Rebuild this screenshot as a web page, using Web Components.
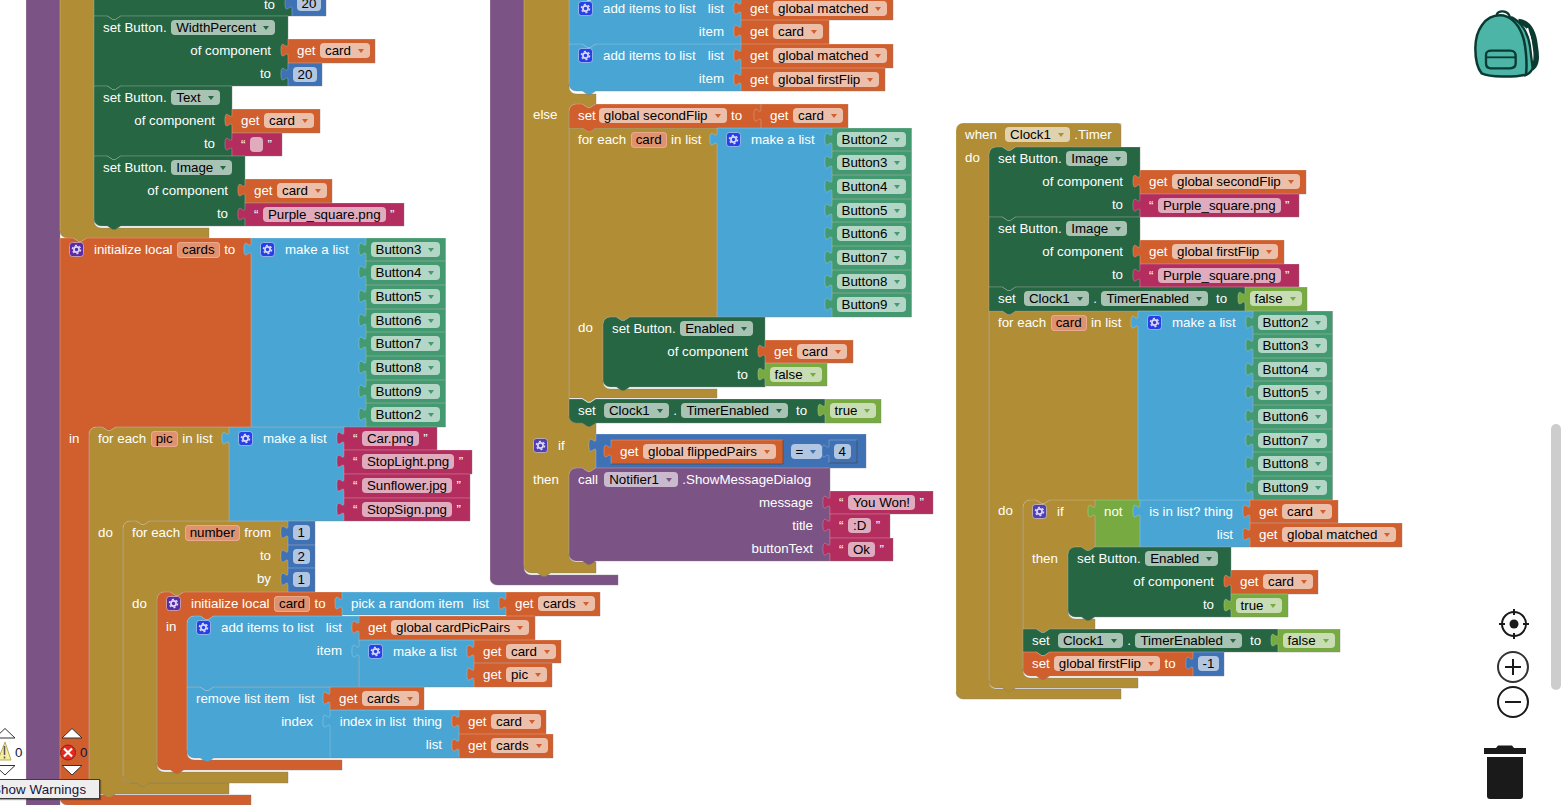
<!DOCTYPE html>
<html>
<head>
<meta charset="utf-8">
<title>Blocks</title>
<style>
  html, body { margin: 0; padding: 0; background: #fff; overflow: hidden; }
</style>
</head>
<body>
<blk-workspace>
  <!-- left stack -->
  <blk-block c="proc" x="26" y="-100" edge="60:815"></blk-block>
  <blk-block c="ctrl" x="60" y="-100" edge="94:228 209:238" rb nb></blk-block>
  <blk-block c="set" x="94" y="-54" edge="292:16" nt nb>
    <blk-row h="46.6"></blk-row>
    <blk-row right>to</blk-row>
  </blk-block>
  <blk-num x="292" y="-8" r="326" b="16">20</blk-num>
  <blk-block c="set" x="94" y="16" edge="288:86" nt nb>
    <blk-row>set Button.<blk-field>WidthPercent</blk-field></blk-row>
    <blk-row right>of component</blk-row>
    <blk-row right>to</blk-row>
  </blk-block>
  <blk-get x="288" y="39" r="375" b="63">card</blk-get>
  <blk-num x="288" y="63" r="322" b="86">20</blk-num>
  <blk-block c="set" x="94" y="86" edge="232:156" nt nb>
    <blk-row>set Button.<blk-field>Text</blk-field></blk-row>
    <blk-row right>of component</blk-row>
    <blk-row right>to</blk-row>
  </blk-block>
  <blk-get x="232" y="109" r="320" b="133">card</blk-get>
  <blk-str x="232" y="133" r="282" b="156"></blk-str>
  <blk-block c="set" x="94" y="156" edge="245:226" nt nb rb>
    <blk-row>set Button.<blk-field>Image</blk-field></blk-row>
    <blk-row right>of component</blk-row>
    <blk-row right>to</blk-row>
  </blk-block>
  <blk-get x="245" y="179" r="332" b="203">card</blk-get>
  <blk-str x="245" y="203" r="404" b="226">Purple_square.png</blk-str>

  <blk-block c="var" x="60" y="238" edge="251:427 89:795 251:805" nt rb nb>
    <blk-row><blk-gear tone="#5a2ba6"></blk-gear>initialize local<blk-field name>cards</blk-field>to</blk-row>
    <blk-row h="166"></blk-row>
    <blk-row>in</blk-row>
  </blk-block>
  <blk-block c="list" x="251" y="238" edge="366:427" tab>
    <blk-row><blk-gear></blk-gear>make a list</blk-row>
  </blk-block>
  <blk-btn x="366" y="238" b="261">Button3</blk-btn>
  <blk-btn x="366" y="261" b="285">Button4</blk-btn>
  <blk-btn x="366" y="285" b="309">Button5</blk-btn>
  <blk-btn x="366" y="309" b="332">Button6</blk-btn>
  <blk-btn x="366" y="332" b="356">Button7</blk-btn>
  <blk-btn x="366" y="356" b="380">Button8</blk-btn>
  <blk-btn x="366" y="380" b="403">Button9</blk-btn>
  <blk-btn x="366" y="403" b="427">Button2</blk-btn>

  <blk-block c="ctrl" x="89" y="427" edge="229:521 123:783 229:794" rt nt rb nb>
    <blk-row>for each<blk-field name>pic</blk-field>in list</blk-row>
    <blk-row h="71"></blk-row>
    <blk-row>do</blk-row>
  </blk-block>
  <blk-block c="list" x="229" y="427" edge="344:521" tab>
    <blk-row><blk-gear></blk-gear>make a list</blk-row>
  </blk-block>
  <blk-str x="344" y="427" r="437" b="450">Car.png</blk-str>
  <blk-str x="344" y="450" r="472" b="474">StopLight.png</blk-str>
  <blk-str x="344" y="474" r="470" b="498">Sunflower.jpg</blk-str>
  <blk-str x="344" y="498" r="470" b="521">StopSign.png</blk-str>

  <blk-block c="ctrl" x="123" y="521" edge="288:592 157:772 288:783" rt nt rb nb>
    <blk-row right>for each<blk-field name>number</blk-field>from</blk-row>
    <blk-row right>to</blk-row>
    <blk-row right>by</blk-row>
    <blk-row h="2"></blk-row>
    <blk-row>do</blk-row>
  </blk-block>
  <blk-num x="288" y="521" r="315" b="545">1</blk-num>
  <blk-num x="288" y="545" r="315" b="568">2</blk-num>
  <blk-num x="288" y="568" r="315" b="592">1</blk-num>

  <blk-block c="var" x="157" y="592" edge="342:616 187:760 342:770" rt nt rb nb>
    <blk-row><blk-gear tone="#5a2ba6"></blk-gear>initialize local<blk-field name>card</blk-field>to</blk-row>
    <blk-row>in</blk-row>
  </blk-block>
  <blk-block c="list" x="342" y="592" edge="506:615" tab>
    <blk-row>pick a random item<blk-push></blk-push>list</blk-row>
  </blk-block>
  <blk-get x="506" y="592" r="600" b="616">cards</blk-get>
  <blk-block c="list" x="187" y="616" edge="359:687" rt nt nb>
    <blk-row><blk-gear></blk-gear>add items to list<blk-push></blk-push>list</blk-row>
    <blk-row right>item</blk-row>
  </blk-block>
  <blk-get x="359" y="616" r="535" b="640">global cardPicPairs</blk-get>
  <blk-block c="list" x="359" y="640" edge="474:687" tab>
    <blk-row><blk-gear></blk-gear>make a list</blk-row>
  </blk-block>
  <blk-get x="474" y="640" r="561" b="663">card</blk-get>
  <blk-get x="474" y="663" r="552" b="687">pic</blk-get>
  <blk-block c="list" x="187" y="687" edge="330:758" nt rb nb>
    <blk-row>remove list item<blk-push></blk-push>list</blk-row>
    <blk-row right>index</blk-row>
  </blk-block>
  <blk-get x="330" y="687" r="424" b="710">cards</blk-get>
  <blk-block c="list" x="330" y="710" edge="459:758" tab>
    <blk-row right>index in list&nbsp; thing</blk-row>
    <blk-row right>list</blk-row>
  </blk-block>
  <blk-get x="459" y="710" r="546" b="734">card</blk-get>
  <blk-get x="459" y="734" r="553" b="758">cards</blk-get>

  <!-- middle stack -->
  <blk-block c="proc" x="490" y="-100" edge="524:575 618:585" rb></blk-block>
  <blk-block c="ctrl" x="524" y="-60" edge="569:94 596:104 569:423 596:468 569:562 596:573" rb nb>
    <blk-row h="163"></blk-row>
    <blk-row>else</blk-row>
    <blk-row h="307.5"></blk-row>
    <blk-row><blk-gear tone="#4f3fb3"></blk-gear>if</blk-row>
    <blk-row h="11"></blk-row>
    <blk-row>then</blk-row>
  </blk-block>
  <blk-block c="list" x="569" y="-3" edge="741:44" nt nb>
    <blk-row><blk-gear></blk-gear>add items to list<blk-push></blk-push>list</blk-row>
    <blk-row right>item</blk-row>
  </blk-block>
  <blk-get x="741" y="-3" r="893" b="20">global matched</blk-get>
  <blk-get x="741" y="20" r="829" b="44">card</blk-get>
  <blk-block c="list" x="569" y="44" edge="741:91" nt rb nb>
    <blk-row><blk-gear></blk-gear>add items to list<blk-push></blk-push>list</blk-row>
    <blk-row right>item</blk-row>
  </blk-block>
  <blk-get x="741" y="44" r="893" b="68">global matched</blk-get>
  <blk-get x="741" y="68" r="885" b="91">global firstFlip</blk-get>

  <blk-block c="ctrl" x="569" y="128" edge="717:317 603:389 717:398" nt nb>
    <blk-row>for each<blk-field name>card</blk-field>in list</blk-row>
    <blk-row h="165"></blk-row>
    <blk-row>do</blk-row>
  </blk-block>
  <blk-block c="var" x="569" y="104" edge="761:128" rt nt nb>
    <blk-row>set<blk-field style="margin-left:-1.5px">global secondFlip</blk-field>to</blk-row>
  </blk-block>
  <blk-get x="761" y="104" r="848" b="128">card</blk-get>
  <blk-block c="list" x="717" y="128" edge="832:317" tab>
    <blk-row><blk-gear></blk-gear>make a list</blk-row>
  </blk-block>
  <blk-btn x="832" y="128" b="151">Button2</blk-btn>
  <blk-btn x="832" y="151" b="175">Button3</blk-btn>
  <blk-btn x="832" y="175" b="199">Button4</blk-btn>
  <blk-btn x="832" y="199" b="222">Button5</blk-btn>
  <blk-btn x="832" y="222" b="246">Button6</blk-btn>
  <blk-btn x="832" y="246" b="270">Button7</blk-btn>
  <blk-btn x="832" y="270" b="293">Button8</blk-btn>
  <blk-btn x="832" y="293" b="317">Button9</blk-btn>
  <blk-block c="set" x="603" y="317" edge="765:387" rt nt rb nb>
    <blk-row>set Button.<blk-field>Enabled</blk-field></blk-row>
    <blk-row right>of component</blk-row>
    <blk-row right>to</blk-row>
  </blk-block>
  <blk-get x="765" y="340" r="853" b="363">card</blk-get>
  <blk-bool x="765" y="363" r="827" b="386">false</blk-bool>
  <blk-block c="set" x="569" y="399" edge="825:423" nt rb nb>
    <blk-row>set&nbsp;<blk-field>Clock1</blk-field>.<blk-field>TimerEnabled</blk-field>&nbsp;to</blk-row>
  </blk-block>
  <blk-bool x="825" y="399" r="881" b="423">true</blk-bool>

  <blk-block c="math" x="596" y="434" edge="866:468" tab>
    <blk-row h="34"><blk-push w="181"></blk-push><blk-field>=</blk-field></blk-row>
  </blk-block>
  <blk-get x="611" y="440" r="783" b="464" outline>global flippedPairs</blk-get>
  <blk-num x="829" y="440" r="857" b="463" outline>4</blk-num>
  <blk-block c="proc" x="569" y="468" edge="830:561" rt nt rb nb>
    <blk-row>call&nbsp;<blk-field style="margin-left:-2px">Notifier1</blk-field>.ShowMessageDialog</blk-row>
    <blk-row right>message</blk-row>
    <blk-row right>title</blk-row>
    <blk-row right>buttonText</blk-row>
  </blk-block>
  <blk-str x="830" y="491" r="933" b="514">You Won!</blk-str>
  <blk-str x="830" y="514" r="890" b="538">:D</blk-str>
  <blk-str x="830" y="538" r="893" b="561">Ok</blk-str>

  <!-- right stack -->
  <blk-block c="ctrl" x="956" y="123" edge="1121:147 989:689 1121:699" rt rtr rb>
    <blk-row>when&nbsp;<blk-field>Clock1</blk-field>.Timer</blk-row>
    <blk-row>do</blk-row>
  </blk-block>
  <blk-block c="set" x="989" y="147" edge="1140:217" rt nt nb>
    <blk-row>set Button.<blk-field>Image</blk-field></blk-row>
    <blk-row right>of component</blk-row>
    <blk-row right>to</blk-row>
  </blk-block>
  <blk-get x="1140" y="170" r="1306" b="194">global secondFlip</blk-get>
  <blk-str x="1140" y="194" r="1299" b="217">Purple_square.png</blk-str>
  <blk-block c="set" x="989" y="217" edge="1140:287" nt nb>
    <blk-row>set Button.<blk-field>Image</blk-field></blk-row>
    <blk-row right>of component</blk-row>
    <blk-row right>to</blk-row>
  </blk-block>
  <blk-get x="1140" y="240" r="1284" b="264">global firstFlip</blk-get>
  <blk-str x="1140" y="264" r="1299" b="287">Purple_square.png</blk-str>
  <blk-block c="ctrl" x="989" y="311" edge="1138:500 1023:678 1138:688" nt rb nb>
    <blk-row>for each<blk-field name>card</blk-field>in list</blk-row>
    <blk-row h="165"></blk-row>
    <blk-row>do</blk-row>
  </blk-block>
  <blk-block c="set" x="989" y="287" edge="1245:311" nt nb>
    <blk-row>set&nbsp;<blk-field>Clock1</blk-field>.<blk-field>TimerEnabled</blk-field>&nbsp;to</blk-row>
  </blk-block>
  <blk-bool x="1245" y="287" r="1307" b="311">false</blk-bool>
  <blk-block c="list" x="1138" y="311" edge="1253:500" tab>
    <blk-row><blk-gear></blk-gear>make a list</blk-row>
  </blk-block>
  <blk-btn x="1253" y="311" b="334">Button2</blk-btn>
  <blk-btn x="1253" y="334" b="358">Button3</blk-btn>
  <blk-btn x="1253" y="358" b="381">Button4</blk-btn>
  <blk-btn x="1253" y="381" b="405">Button5</blk-btn>
  <blk-btn x="1253" y="405" b="429">Button6</blk-btn>
  <blk-btn x="1253" y="429" b="452">Button7</blk-btn>
  <blk-btn x="1253" y="452" b="476">Button8</blk-btn>
  <blk-btn x="1253" y="476" b="500">Button9</blk-btn>
  <blk-block c="ctrl" x="1023" y="500" edge="1095:548 1068:619 1095:629" rt nt nb>
    <blk-row><blk-gear tone="#4f3fb3"></blk-gear>if</blk-row>
    <blk-row h="24"></blk-row>
    <blk-row>then</blk-row>
  </blk-block>
  <blk-block c="logic" x="1095" y="500" edge="1140:547" tab>
    <blk-row>not</blk-row>
  </blk-block>
  <blk-block c="list" x="1140" y="500" edge="1250:547" tab>
    <blk-row right>is in list? thing</blk-row>
    <blk-row right>list</blk-row>
  </blk-block>
  <blk-get x="1250" y="500" r="1338" b="523">card</blk-get>
  <blk-get x="1250" y="523" r="1402" b="547">global matched</blk-get>
  <blk-block c="set" x="1068" y="547" edge="1231:617" rt nt rb nb>
    <blk-row>set Button.<blk-field>Enabled</blk-field></blk-row>
    <blk-row right>of component</blk-row>
    <blk-row right>to</blk-row>
  </blk-block>
  <blk-get x="1231" y="570" r="1318" b="594">card</blk-get>
  <blk-bool x="1231" y="594" r="1288" b="617">true</blk-bool>
  <blk-block c="set" x="1023" y="629" edge="1278:652" nt nb>
    <blk-row>set&nbsp;<blk-field>Clock1</blk-field>.<blk-field>TimerEnabled</blk-field>&nbsp;to</blk-row>
  </blk-block>
  <blk-bool x="1278" y="629" r="1340" b="652">false</blk-bool>
  <blk-block c="var" x="1023" y="652" edge="1193:676" nt rb nb>
    <blk-row>set<blk-field style="margin-left:-.5px">global firstFlip</blk-field>to</blk-row>
  </blk-block>
  <blk-num x="1193" y="652" r="1224" b="676">-1</blk-num>

  <ws-warnings></ws-warnings>
  <ws-backpack></ws-backpack>
  <ws-controls></ws-controls>
  <ws-scrollbar></ws-scrollbar>
</blk-workspace>

<script>
const COLORS = {
  proc: '#7c5385', ctrl: '#b18e35', var: '#d05f2d', list: '#49a6d4',
  set: '#266643', comp: '#439970', text: '#b32d5e', math: '#3f71b5', logic: '#77ab41'
}
const RAD = 7.1
const NOTCH_R = 'l5.33,3.55 2.67,0 5.33,-3.55'
const NOTCH_L = 'l-5.33,3.55 -2.67,0 -5.33,-3.55'

class BlkWorkspace extends HTMLElement {
  constructor() {
    super()
    this.attachShadow({mode: 'open'})
    this.shadowRoot.innerHTML = `
    <style>
      :host {
        display: block;
        position: relative;
        width: 1561px;
        height: 805px;
        overflow: hidden;
        background: #fff;
        font: 13.33px "Liberation Sans", Arial, sans-serif;
      }
    </style>
    <slot></slot>`
  }
}

// a block: position on the canvas + right edge profile "right:bottom right:bottom ..."
class BlkBlock extends HTMLElement {
  constructor() {
    super()
    this.attachShadow({mode: 'open'})
  }
  connectedCallback() {
    const x = +this.getAttribute('x'), y = +this.getAttribute('y')
    const steps = this.getAttribute('edge').trim().split(/\s+/).map(s => {
      const p = s.split(':')
      return [+p[0] - x, +p[1] - y]
    })
    const color = COLORS[this.getAttribute('c')]
    const w = Math.max(...steps.map(s => s[0]))
    const h = steps[steps.length - 1][1]
    const has = a => this.hasAttribute(a)

    let top = has('rt') ? `M0,${RAD} A${RAD},${RAD} 0 0 1 ${RAD},0` : 'M0,0'
    if (has('nt')) top += ` H13.3 ${NOTCH_R}`
    const r0 = steps[0][0]
    let right = has('rtr') ? `H${r0 - 3} A3,3 0 0 1 ${r0},3` : `H${r0}`
    let cur = r0
    let rest = ''
    steps.forEach((s, i) => {
      const next = steps[i + 1]
      if (!next) { rest += ` V${s[1]}`; return }
      if (next[0] < cur) {
        const a = next[0]
        rest += ` V${s[1]} H${a + 26.7} ${NOTCH_L} H${a + RAD} A${RAD},${RAD} 0 0 0 ${a},${s[1] + RAD}`
      } else {
        rest += ` V${s[1] - RAD} A${RAD},${RAD} 0 0 0 ${cur + RAD},${s[1]} H${next[0]}`
      }
      cur = next[0]
    })
    let bottom = has('nb') ? ` H26.7 ${NOTCH_L}` : ''
    bottom += has('rb') ? ` H${RAD} A${RAD},${RAD} 0 0 1 0,${h - RAD}` : ' H0'
    let left = ''
    if (has('tab')) left = ' V17.8 c0,-8.9 -7.1,7.1 -7.1,-6.67 s7.1,2.2 7.1,-6.67'
    const d = `${top} ${right}${rest}${bottom}${left} Z`
    const edge = `M${r0},0 ${rest}${bottom}`
    const line = has('outline') ? 'rgba(0,0,0,.45)' : 'rgba(0,0,0,.2)'

    this.shadowRoot.innerHTML = `
    <style>
      :host {
        position: absolute;
        display: block;
        left: ${x}px;
        top: ${y}px;
        width: ${w}px;
        height: ${h}px;
        color: #fff;
        --blk-color: ${color};
      }
      svg { position: absolute; left: 0; top: 0; overflow: visible; }
      .rows { position: relative; display: flex; flex-direction: column; width: ${r0}px; }
    </style>
    <svg width="${w}" height="${h}">
      <path d="${d}" fill="${color}" stroke="rgba(255,255,255,.22)"></path>
      <path d="${edge}" fill="none" stroke="${line}"></path>
    </svg>
    <div class="rows"><slot></slot></div>`
  }
}

class BlkRow extends HTMLElement {
  constructor() {
    super()
    this.attachShadow({mode: 'open'})
    this.shadowRoot.innerHTML = `
    <style>
      :host {
        display: flex;
        align-items: center;
        gap: 4.5px;
        height: 23px;
        padding: 0 17px 0 9px;
        box-sizing: border-box;
        white-space: nowrap;
        flex: none;
      }
      :host([right]) { justify-content: flex-end; }
      :host([tight]) { padding: 0 0 0 4.5px; }
    </style>
    <slot></slot>`
  }
  connectedCallback() {
    if (this.hasAttribute('h')) this.style.height = this.getAttribute('h') + 'px'
  }
}

class BlkPush extends HTMLElement {
  constructor() {
    super()
    this.attachShadow({mode: 'open'})
    this.shadowRoot.innerHTML = `<style>:host { display: block; flex: 1; }</style>`
  }
  connectedCallback() {
    if (this.hasAttribute('w')) this.style.flex = `0 0 ${this.getAttribute('w')}px`
  }
}

class BlkField extends HTMLElement {
  constructor() {
    super()
    this.attachShadow({mode: 'open'})
    this.shadowRoot.innerHTML = `
    <style>
      :host {
        display: inline-flex;
        align-items: center;
        height: 15px;
        min-width: 13px;
        padding-left: 5px;
        border-radius: 4px;
        background: rgba(255,255,255,.6);
        color: #000;
        box-sizing: border-box;
        flex: none;
      }
      .arrow {
        width: 0; height: 0;
        margin: 1px 6px 0 7px;
        border: 3px solid transparent;
        border-top: 4px solid var(--blk-color);
        border-bottom: 0;
      }
      :host([plain]), :host([name]) { padding-right: 5px; }
      :host([plain]) .arrow, :host([name]) .arrow { display: none; }
      :host([name]) {
        height: 16px;
        padding: 0 5px;
        background: #df9270;
        box-shadow: inset 0 0 0 1px #eaa98a;
      }
    </style>
    <slot></slot><span class="arrow"></span>`
  }
}

class BlkGear extends HTMLElement {
  constructor() {
    super()
    this.attachShadow({mode: 'open'})
  }
  connectedCallback() {
    const tone = this.getAttribute('tone') || '#2440e6'
    this.shadowRoot.innerHTML = `
    <style>
      :host { display: block; width: 15px; height: 15px; margin-right: 5.5px; flex: none; }
      svg { display: block; }
    </style>
    <svg width="15" height="15" viewBox="0 0 15 15">
      <rect x=".5" y=".5" width="14" height="14" rx="3" fill="${tone}" stroke="rgba(255,255,255,.45)"></rect>
      <circle cx="7.5" cy="7.5" r="2.6" fill="none" stroke="#dcd8f6" stroke-width="1.7"></circle>
      <circle cx="7.5" cy="7.5" r="4.1" fill="none" stroke="#dcd8f6" stroke-width="1.4" stroke-dasharray="2.1 2.2"></circle>
    </svg>`
  }
}

// value blocks: same frame, only the colour and the inner row differ
class BlkValue extends HTMLElement {
  constructor() {
    super()
    this.attachShadow({mode: 'open'})
  }
  get color() { return 'var' }
  get defaultRight() { return '0' }
  get inner() { return '' }
  connectedCallback() {
    const x = this.getAttribute('x'), y = this.getAttribute('y'), b = this.getAttribute('b')
    const r = this.getAttribute('r') || this.defaultRight
    const outline = this.hasAttribute('outline') ? 'outline' : ''
    this.shadowRoot.innerHTML = `
    <style>:host { display: contents; }</style>
    <blk-block c="${this.color}" x="${x}" y="${y}" edge="${r}:${b}" tab ${outline}>${this.inner}</blk-block>`
  }
}
class BlkGet extends BlkValue {
  get inner() { return `<blk-row>get<blk-field><slot></slot></blk-field></blk-row>` }
}
class BlkStr extends BlkValue {
  get color() { return 'text' }
  get inner() { return `<blk-row>“<blk-field plain><slot></slot></blk-field>”</blk-row>` }
}
class BlkNum extends BlkValue {
  get color() { return 'math' }
  get inner() { return `<blk-row tight><blk-field plain><slot></slot></blk-field></blk-row>` }
}
class BlkBool extends BlkValue {
  get color() { return 'logic' }
  get inner() { return `<blk-row tight><blk-field><slot></slot></blk-field></blk-row>` }
}
class BlkBtn extends BlkValue {
  get color() { return 'comp' }
  get defaultRight() { return String(+this.getAttribute('x') + 79.5) }
  get inner() { return `<blk-row tight><blk-field><slot></slot></blk-field></blk-row>` }
}

class WsWarnings extends HTMLElement {
  constructor() {
    super()
    this.attachShadow({mode: 'open'})
    this.shadowRoot.innerHTML = `
    <style>
      :host { position: absolute; left: 0; top: 726px; width: 110px; height: 79px; display: block; }
      svg { position: absolute; left: 0; top: 0; overflow: visible; }
      .n { position: absolute; top: 19px; color: #14143c; font-size: 13.33px; line-height: 16px; }
      .tip {
        position: absolute; left: -13px; top: 52.5px; width: 113px; height: 20px;
        background: #eeeeee; border: 1px solid #3c3c3c;
        padding-left: 4px; box-sizing: border-box;
        color: #14143c; line-height: 19px; white-space: nowrap; letter-spacing: .1px;
        box-shadow: 1px 1px 1px rgba(0,0,0,.35);
      }
    </style>
    <svg width="110" height="60">
      <path d="M-5,12 L5,2.5 L15,12 Z" fill="#fff" stroke="#333"></path>
      <path d="M-5,39.500 L5,49 L15,39.500 Z" fill="#fff" stroke="#333"></path>
      <path d="M5,16 L11,34 L-2,34 Z" fill="#f7ee9e" stroke="#b9ad5c" stroke-linejoin="round"></path>
      <path d="M4.500,20 V29 M4.500,30.500 V32.500" stroke="#555" stroke-width="1.5"></path>
      <path d="M62,12 L72,2.500 L82,12 Z" fill="#fff" stroke="#333"></path>
      <path d="M62,39.500 L72,49 L82,39.500 Z" fill="#fff" stroke="#333"></path>
      <circle cx="68" cy="26.500" r="7.500" fill="#e8281c" stroke="#7a2a1c"></circle>
      <path d="M64,22.500 L72,30.500 M72,22.500 L64,30.500" stroke="#fff" stroke-width="2.200"></path>
    </svg>
    <span class="n" style="left:15px">0</span>
    <span class="n" style="left:80px">0</span>
    <div class="tip">Show Warnings</div>`
  }
}

class WsBackpack extends HTMLElement {
  constructor() {
    super()
    this.attachShadow({mode: 'open'})
    this.shadowRoot.innerHTML = `
    <style>:host { position: absolute; left: 1450px; top: 0; width: 111px; height: 100px; display: block; }</style>
    <svg width="111" height="100" viewBox="0 0 333 300">
      <path d="M205,64 C238,68 252,100 256,140 C260,165 263,192 245,205" fill="none" stroke="#0b3a30" stroke-width="16"></path>
      <path d="M232,84 C243,115 248,160 241,192" fill="none" stroke="#fff" stroke-width="5"></path>
      <path d="M140,46 C140,30 175,28 180,52" fill="none" stroke="#0b3a30" stroke-width="7"></path>
      <path d="M185,52 C215,66 235,100 240,140 L248,205 C243,216 235,224 224,226 Z" fill="#4cb5a8" stroke="#0b3a30" stroke-width="7" stroke-linejoin="round"></path>
      <path d="M150,46 C105,46 76,90 76,145 C76,180 82,205 95,220 C120,232 190,232 228,224 C232,190 228,130 215,100 C203,70 180,46 150,46 Z" fill="#4cb5a8" stroke="#0b3a30" stroke-width="7.500" stroke-linejoin="round"></path>
      <path d="M108,165 C108,155 112,152 125,152 L180,152 C195,152 197,160 197,170 L197,190 C197,200 190,205 180,205 L122,205 C112,205 108,198 108,190 Z" fill="none" stroke="#0b3a30" stroke-width="7"></path>
      <path d="M108,172 L197,172" stroke="#0b3a30" stroke-width="5.500"></path>
    </svg>`
  }
}

class WsControls extends HTMLElement {
  constructor() {
    super()
    this.attachShadow({mode: 'open'})
    this.shadowRoot.innerHTML = `
    <style>:host { position: absolute; left: 1470px; top: 600px; width: 70px; height: 205px; display: block; }</style>
    <svg width="70" height="205" fill="none" stroke="#1a1a1a">
      <circle cx="44" cy="24" r="12" stroke-width="2"></circle>
      <circle cx="44" cy="24" r="4.500" fill="#1a1a1a" stroke="none"></circle>
      <path d="M44,9 V15 M44,33 V39 M29,24 H35 M53,24 H59" stroke-width="2"></path>
      <circle cx="43" cy="67" r="15" stroke-width="2" stroke="#333"></circle>
      <path d="M35,67 H51 M43,59 V75" stroke-width="2"></path>
      <circle cx="43" cy="102" r="15" stroke-width="2"></circle>
      <path d="M35,102 H51" stroke-width="2"></path>
      <path d="M14,148 H26 L28,145.500 H42 L44,148 H56 V154 H14 Z" fill="#1a1a1a" stroke="none"></path>
      <path d="M17,157 H53 V196 A3,3 0 0 1 50,199 H20 A3,3 0 0 1 17,196 Z" fill="#1a1a1a" stroke="none"></path>
    </svg>`
  }
}

class WsScrollbar extends HTMLElement {
  constructor() {
    super()
    this.attachShadow({mode: 'open'})
    this.shadowRoot.innerHTML = `
    <style>
      :host {
        position: absolute; left: 1551px; top: 424px; width: 10px; height: 266px;
        display: block; background: #cdcdcd; border-radius: 5px;
      }
    </style>`
  }
}

customElements.define('blk-workspace', BlkWorkspace)
customElements.define('blk-row', BlkRow)
customElements.define('blk-push', BlkPush)
customElements.define('blk-field', BlkField)
customElements.define('blk-gear', BlkGear)
customElements.define('blk-block', BlkBlock)
customElements.define('blk-get', BlkGet)
customElements.define('blk-str', BlkStr)
customElements.define('blk-num', BlkNum)
customElements.define('blk-bool', BlkBool)
customElements.define('blk-btn', BlkBtn)
customElements.define('ws-warnings', WsWarnings)
customElements.define('ws-backpack', WsBackpack)
customElements.define('ws-controls', WsControls)
customElements.define('ws-scrollbar', WsScrollbar)
</script>
</body>
</html>
